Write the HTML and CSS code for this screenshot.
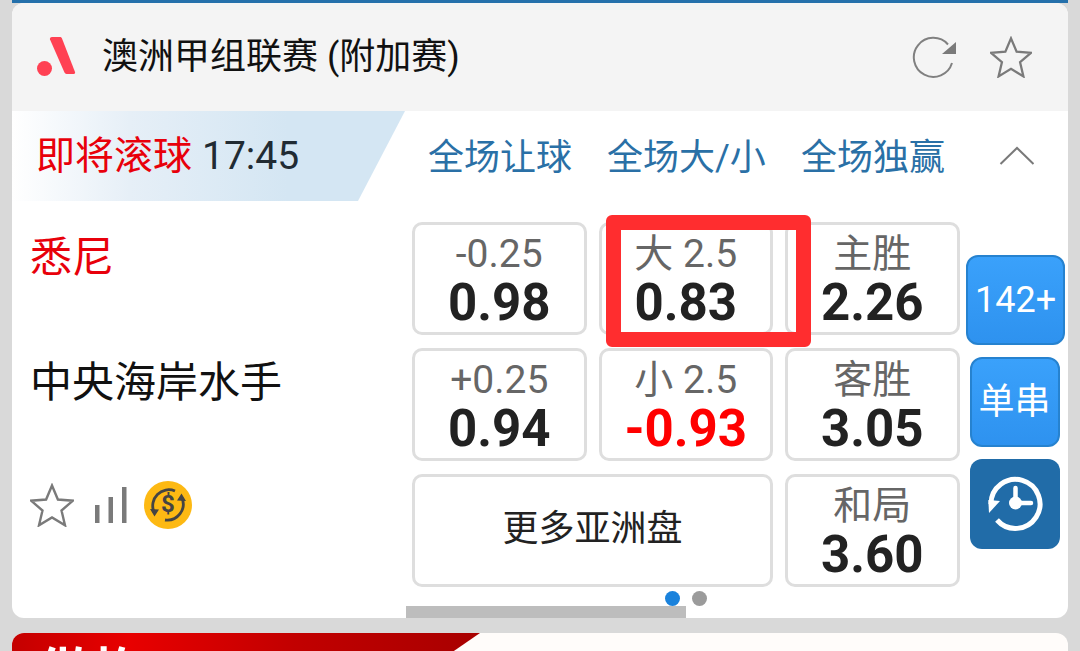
FILE: index.html
```html
<!DOCTYPE html>
<html lang="zh">
<head>
<meta charset="utf-8">
<title>澳洲甲组联赛</title>
<link rel="stylesheet" href="styles.css">
</head>
<body>
<div class="topline"></div>
<section class="card">
  <header class="league">
    <svg class="logo" viewBox="0 0 40 40"><circle cx="7.500" cy="31.500" r="7.500" fill="#ff4153"/><path d="M15 0h8c1 0 1.600.5 2 1.500L38 35c.4 1.200-.2 2-1.400 2h-7c-1 0-1.700-.5-2.100-1.400L13 2.500c-.4-1.300.5-2.500 2-2.500z" fill="#ff4153"/></svg>
    <h1 class="league-name">澳洲甲组联赛 (附加赛)</h1>
    <svg class="ico-refresh" viewBox="0 0 44 44"><path d="M40 27A19.500 19.500 0 1 1 36 8.500" fill="none" stroke="#808080" stroke-width="2"/><path d="M44 6v12H30z" fill="#7a7a7a"/></svg>
    <svg class="ico-star" viewBox="0 0 44 44"><path d="M22 2.500l5.900 14 15 1.200-11.400 9.800 3.500 14.800L22 34.400 9 42.300l3.500-14.800L1.100 17.700l15-1.200z" fill="none" stroke="#7a7a7a" stroke-width="2.400"/></svg>
  </header>
  <div class="tabs">
    <div class="status"><span class="soon">即将滚球</span> <span class="time">17:45</span></div>
    <div class="tab-labels">
      <span>全场让球</span>
      <span>全场大/小</span>
      <span>全场独赢</span>
    </div>
    <svg class="chev" viewBox="0 0 36 20"><path d="M1.500 18L18 2l16.500 16" fill="none" stroke="#7a7a7a" stroke-width="2"/></svg>
  </div>
  <div class="body">
    <div class="teams">
      <div class="team home">悉尼</div>
      <div class="team">中央海岸水手</div>
      <div class="team-icons">
        <svg class="ico-star2" viewBox="0 0 44 44"><path d="M22 2.500l5.900 14 15 1.200-11.400 9.800 3.500 14.800L22 34.400 9 42.300l3.500-14.800L1.100 17.700l15-1.200z" fill="none" stroke="#7a7a7a" stroke-width="2.400"/></svg>
        <svg class="ico-bars" viewBox="0 0 33 36"><path d="M0 18h4.500v18H0zM13.500 10H18v26h-4.500zM27 0h4.500v36H27z" fill="#7a7a7a"/></svg>
        <svg class="ico-coin" viewBox="0 0 48 48"><circle cx="24" cy="24" r="24" fill="#fdb913"/><path d="M10 31A16 16 0 0 1 31 10" fill="none" stroke="#444" stroke-width="2.800"/><path d="M38 17A16 16 0 0 1 21 39" fill="none" stroke="#444" stroke-width="2.800"/><path d="M6 28l9 .5-4.500 7zM42 20l-9-.5 4.500-7z" fill="#444"/><text x="24" y="31" class="coin-text">$</text></svg>
      </div>
    </div>
    <div class="odds">
      <div class="cell"><span class="lab">-0.25</span><b class="val">0.98</b></div>
      <div class="cell"><span class="lab">大 2.5</span><b class="val">0.83</b></div>
      <div class="cell"><span class="lab">主胜</span><b class="val">2.26</b></div>
      <div class="cell"><span class="lab">+0.25</span><b class="val">0.94</b></div>
      <div class="cell"><span class="lab">小 2.5</span><b class="val neg">-0.93</b></div>
      <div class="cell"><span class="lab">客胜</span><b class="val">3.05</b></div>
      <div class="cell more">更多亚洲盘</div>
      <div class="cell"><span class="lab">和局</span><b class="val">3.60</b></div>
    </div>
    <div class="side">
      <div class="btn wide">142+</div>
      <div class="btn cjk">单串</div>
      <div class="btn dark">
        <svg class="ico-history" viewBox="0 0 56 56"><path d="M4 28A24.500 24.500 0 1 1 10 44" fill="none" stroke="#fff" stroke-width="5"/><path d="M1.300 24L13 25 2 37z" fill="#fff"/><path d="M28.500 12v15H44" fill="none" stroke="#fff" stroke-width="4.500" stroke-linecap="round"/><circle cx="28.500" cy="27" r="6.500" fill="#fff"/></svg>
      </div>
    </div>
  </div>
  <div class="dot on"></div>
  <div class="dot off"></div>
  <div class="scroll"></div>
  <div class="redbox"></div>
</section>
<section class="promo">
  <div class="promo-red"><span>做梅</span></div>
</section>
</body>
</html>
```
FILE: styles.css
```css
* { box-sizing: border-box; }
html, body { margin: 0; height: 651px; overflow: hidden; }
body {
  background: #d9d9d9;
  padding: 0 12px;
  font-family: Roboto, "Noto Sans CJK SC", sans-serif;
  color: #111;
}
.topline { height: 3px; background: #2570ab; }
.card {
  position: relative;
  height: 615px;
  background: #fff;
  border-radius: 12px;
  overflow: hidden;
}
.league {
  height: 108px;
  background: #f4f4f4;
  display: flex;
  align-items: center;
  padding: 0 36px 0 25px;
}
.logo { width: 40px; height: 40px; flex: none; }
.league-name {
  margin: 0 0 0 25px;
  font: 400 36px/1 Roboto, "Noto Sans CJK SC", sans-serif;
  color: #111;
  flex: 1;
}
.ico-refresh { width: 44px; height: 44px; margin-right: 34px; margin-top: 2px; flex: none; }
.ico-star { width: 42px; height: 42px; flex: none; }
.tabs { height: 90px; display: flex; align-items: center; position: relative; }
.status {
  width: 393px;
  height: 90px;
  padding: 0 0 0 24px;
  display: flex;
  align-items: center;
  gap: 10px;
  white-space: pre;
  background: linear-gradient(90deg, #fff 0, #e6eff7 30%, #d4e6f3 70%);
  clip-path: polygon(0 0, 100% 0, 346px 100%, 0 100%);
}
.soon { font-size: 39px; line-height: 1; color: #e8000b; }
.time { font-size: 39px; line-height: 1; color: #212b33; }
.tab-labels {
  display: flex;
  gap: 35px;
  margin: 4px 0 0 23px;
  font-size: 36px;
  line-height: 1;
  color: #2a70a6;
  white-space: nowrap;
}
.chev { width: 36px; height: 20px; margin-left: 54px; }
.body { display: flex; padding-top: 21px; }
.teams { width: 400px; padding-left: 18px; flex: none; }
.team { height: 126px; font-size: 42px; line-height: 1; padding-top: 15px; color: #111; white-space: nowrap; }
.team.home { height: 125px; color: #e8000b; }
.team-icons { display: flex; align-items: center; margin-top: 8px; }
.ico-star2 { width: 44px; height: 44px; flex: none; }
.ico-bars { width: 33px; height: 36px; margin-left: 21px; flex: none; }
.ico-coin { width: 48px; height: 48px; margin-left: 16px; flex: none; }
.coin-text { font: 700 24px Roboto, sans-serif; fill: #444; text-anchor: middle; }
.odds {
  display: grid;
  grid-template-columns: repeat(3, 174.500px);
  grid-auto-rows: 113px;
  gap: 13px 12px;
  flex: none;
}
.cell {
  border: 3px solid #dedede;
  border-radius: 10px;
  background: #fff;
  display: flex;
  flex-direction: column;
  align-items: center;
  padding-top: 8px;
}
.lab { font-size: 39px; line-height: 42px; color: #666; height: 45px; }
.val { font-size: 51px; line-height: 50px; font-weight: 700; color: #222; }
.val.neg { color: #f00; }
.cell.more {
  grid-column: span 2;
  justify-content: center;
  padding: 0 0 12px;
  font-size: 36px;
  color: #222;
}
.side {
  flex: none;
  margin-left: 5px;
  padding-top: 33px;
  display: flex;
  flex-direction: column;
  align-items: center;
  gap: 12px;
  width: 100px;
}
.btn {
  width: 90px;
  height: 90px;
  border-radius: 12px;
  border: 2px solid #2682cf;
  background: linear-gradient(#3aa1fb, #2e92ef);
  color: #fff;
  font-size: 36px;
  display: flex;
  align-items: center;
  justify-content: center;
}
.btn.cjk { padding-bottom: 9px; }
.btn.wide { width: 99px; margin-left: 2px; }
.btn.dark { background: #216ca8; border: 0; }
.ico-history { width: 56px; height: 56px; }
.dot { position: absolute; top: 588px; width: 15px; height: 15px; border-radius: 50%; }
.dot.on { left: 653px; background: #1a82dc; }
.dot.off { left: 680px; background: #9b9b9b; }
.scroll { position: absolute; left: 394px; top: 603px; width: 280px; height: 12px; background: #bdbdbd; }
.redbox {
  position: absolute;
  left: 594px;
  top: 212px;
  width: 205px;
  height: 132px;
  border: 15px solid #ff2d2f;
  border-radius: 6px;
}
.promo {
  margin-top: 15px;
  height: 40px;
  background: #fffcfa;
  border-radius: 12px;
  overflow: hidden;
}
.promo-red {
  width: 468px;
  height: 40px;
  background: linear-gradient(90deg, #c40000 0, #e80000 25%, #c20000 60%, #a80000 100%);
  clip-path: polygon(0 0, 100% 0, 410px 100%, 0 100%);
  padding: 14px 0 0 26px;
  color: #fff;
  font-size: 55px;
  font-weight: 700;
  line-height: 1;
}
```
